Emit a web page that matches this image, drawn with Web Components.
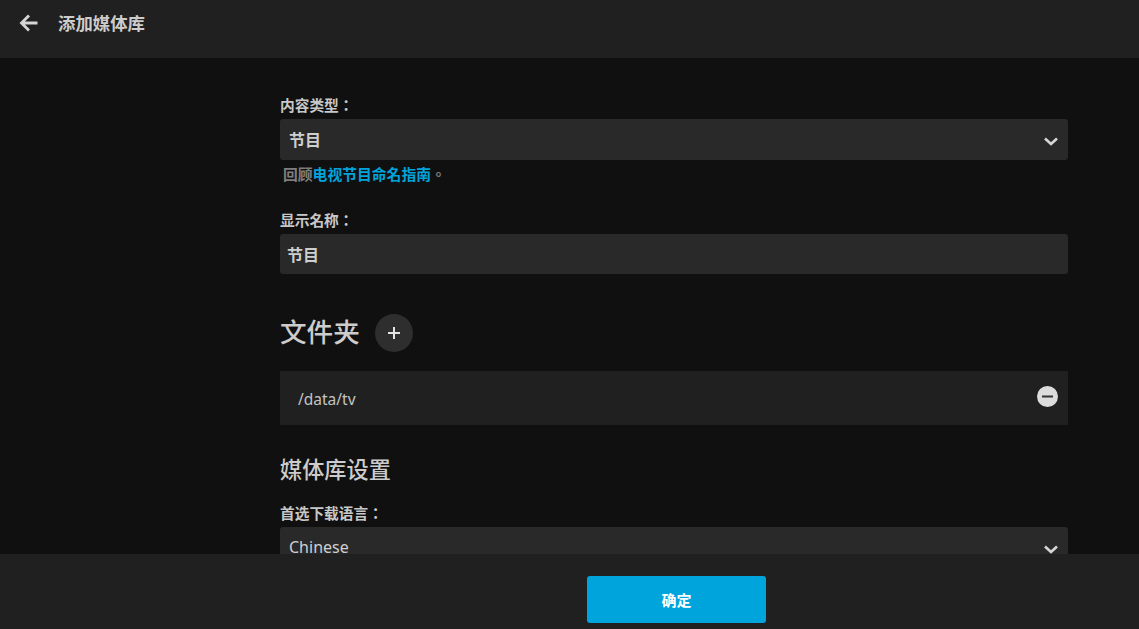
<!DOCTYPE html>
<html lang="zh-Hant">
<head>
<meta charset="utf-8">
<title>添加媒体库</title>
<style>
  html, body { margin: 0; height: 100%; background: #101010; overflow: hidden; }
  body { font-family: "Noto Sans", "Noto Sans CJK TC", sans-serif; color: #d0d0d0; }
  a { color: #00a4dc; font-weight: 700; }
</style>
</head>
<body>
<library-page>
  <page-header slot="header">添加媒体库</page-header>
  <form-select label="内容类型：" value="节目" style="margin-top:37px;--pad:9px">
    <span slot="help">回顾<a>电视节目命名指南</a>。</span>
  </form-select>
  <form-input label="显示名称：" value="节目" style="margin-top:26px"></form-input>
  <folder-head style="margin-top:40px">文件夹</folder-head>
  <folder-row style="margin-top:20px">/data/tv</folder-row>
  <section-title style="margin-top:29px">媒体库设置</section-title>
  <form-select label="首选下载语言：" value="Chinese" style="margin-top:17px;--pad:9px;--val-weight:400"></form-select>
  <page-footer slot="footer">确定</page-footer>
</library-page>

<script>
const fieldCss = `
  .lab{display:block;font-size:14.7px;line-height:20px;font-weight:700;color:#c8c8c8;margin-bottom:4px}
  .box{display:flex;align-items:center;justify-content:space-between;background:#292929;border-radius:3px;font-size:16px;color:#cfcfcf;font-weight:var(--val-weight,700);box-sizing:border-box}
`;

class LibraryPage extends HTMLElement {
  constructor() {
    super();
    this.attachShadow({ mode: "open" }).innerHTML = `
      <style>
        :host{display:flex;flex-direction:column;height:100vh;overflow:hidden}
        main{flex:1;min-height:0;overflow:hidden;padding:0 71px 0 280px}
      </style>
      <slot name="header"></slot>
      <main><slot></slot></main>
      <slot name="footer"></slot>`;
  }
}

class PageHeader extends HTMLElement {
  constructor() {
    super();
    this.attachShadow({ mode: "open" }).innerHTML = `
      <style>
        :host{display:flex;flex:0 0 58px;box-sizing:border-box;height:58px;background:#202020;padding:9px 0 0 19px;gap:19px;align-items:flex-start}
        svg{width:20px;height:20px;margin-top:4px;flex:none}
        h1{margin:0;font-size:17.4px;line-height:28px;font-weight:700;color:#cccccc}
      </style>
      <svg viewBox="0 0 20 20" fill="none" stroke="#d6d6d6" stroke-width="2.8"><path d="M18.5 10H3.5M10 2.5 2.5 10l7.5 7.5"/></svg>
      <h1><slot></slot></h1>`;
  }
}

class FormSelect extends HTMLElement {
  constructor() {
    super();
    this.attachShadow({ mode: "open" }).innerHTML = `
      <style>
        :host{display:block}
        ${fieldCss}
        .box{height:41px;padding:0 9px 2px var(--pad,10px)}
        svg{width:16px;height:16px;flex:none;margin-top:4px}
        .help{display:block;font-size:14.8px;line-height:20px;margin:4px 0 0 3px;font-weight:700;color:#7f7f7f}
        ::slotted([slot=help]){display:block}
      </style>
      <span class="lab"></span>
      <div class="box"><span class="val"></span>
        <svg viewBox="0 0 16 16" fill="none" stroke="#d6d6d6" stroke-width="2.6"><path d="M2 5.5 8 11l6-5.5"/></svg>
      </div>
      <div class="help"><slot name="help"></slot></div>`;
  }
  connectedCallback() {
    const s = this.shadowRoot;
    s.querySelector(".lab").textContent = this.getAttribute("label");
    s.querySelector(".val").textContent = this.getAttribute("value");
    if (!this.querySelector("[slot=help]")) s.querySelector(".help").remove();
  }
}

class FormInput extends HTMLElement {
  constructor() {
    super();
    this.attachShadow({ mode: "open" }).innerHTML = `
      <style>
        :host{display:block}
        ${fieldCss}
        .box{height:40px;padding:0 7px}
      </style>
      <span class="lab"></span>
      <div class="box"></div>`;
  }
  connectedCallback() {
    this.shadowRoot.querySelector(".lab").textContent = this.getAttribute("label");
    this.shadowRoot.querySelector(".box").textContent = this.getAttribute("value");
  }
}

class FolderHead extends HTMLElement {
  constructor() {
    super();
    this.attachShadow({ mode: "open" }).innerHTML = `
      <style>
        :host{display:flex;align-items:center;gap:15px;height:37px}
        h2{margin:0;font-size:26.6px;line-height:37px;font-weight:500;color:#cccccc}
        .add{width:38px;height:38px;border-radius:50%;background:#2e2e2e;display:flex;align-items:center;justify-content:center;flex:none}
        svg{width:14px;height:14px}
      </style>
      <h2><slot></slot></h2>
      <span class="add"><svg viewBox="0 0 14 14" stroke="#e2e2e2" stroke-width="2"><path d="M7 1v12M1 7h12"/></svg></span>`;
  }
}

class FolderRow extends HTMLElement {
  constructor() {
    super();
    this.attachShadow({ mode: "open" }).innerHTML = `
      <style>
        :host{display:flex;align-items:center;justify-content:space-between;height:54px;background:#202020;padding:2px 10px 0 18px;box-sizing:border-box;font-size:15.5px;color:#c4c4c4}
        svg{width:21px;height:21px;flex:none;margin-top:-5px}
      </style>
      <span><slot></slot></span>
      <svg viewBox="0 0 21 21"><circle cx="10.5" cy="10.5" r="10.5" fill="#dcdcdc"/><rect x="5" y="9.5" width="11" height="2" fill="#333"/></svg>`;
  }
}

class SectionTitle extends HTMLElement {
  constructor() {
    super();
    this.attachShadow({ mode: "open" }).innerHTML = `
      <style>
        :host{display:block;font-size:22.2px;line-height:32px;font-weight:500;color:#cccccc}
      </style>
      <slot></slot>`;
  }
}

class PageFooter extends HTMLElement {
  constructor() {
    super();
    this.attachShadow({ mode: "open" }).innerHTML = `
      <style>
        :host{display:flex;flex:0 0 75px;height:75px;box-sizing:border-box;background:#202020;justify-content:center;padding:22px 0 6px 214px;position:relative;z-index:1}
        button{width:179px;height:47px;border:0;border-radius:3px;background:#00a4dc;color:#fff;font:700 15px "Noto Sans","Noto Sans CJK TC",sans-serif}
      </style>
      <button><slot></slot></button>`;
  }
}

customElements.define("library-page", LibraryPage);
customElements.define("page-header", PageHeader);
customElements.define("form-select", FormSelect);
customElements.define("form-input", FormInput);
customElements.define("folder-head", FolderHead);
customElements.define("folder-row", FolderRow);
customElements.define("section-title", SectionTitle);
customElements.define("page-footer", PageFooter);
</script>
</body>
</html>
